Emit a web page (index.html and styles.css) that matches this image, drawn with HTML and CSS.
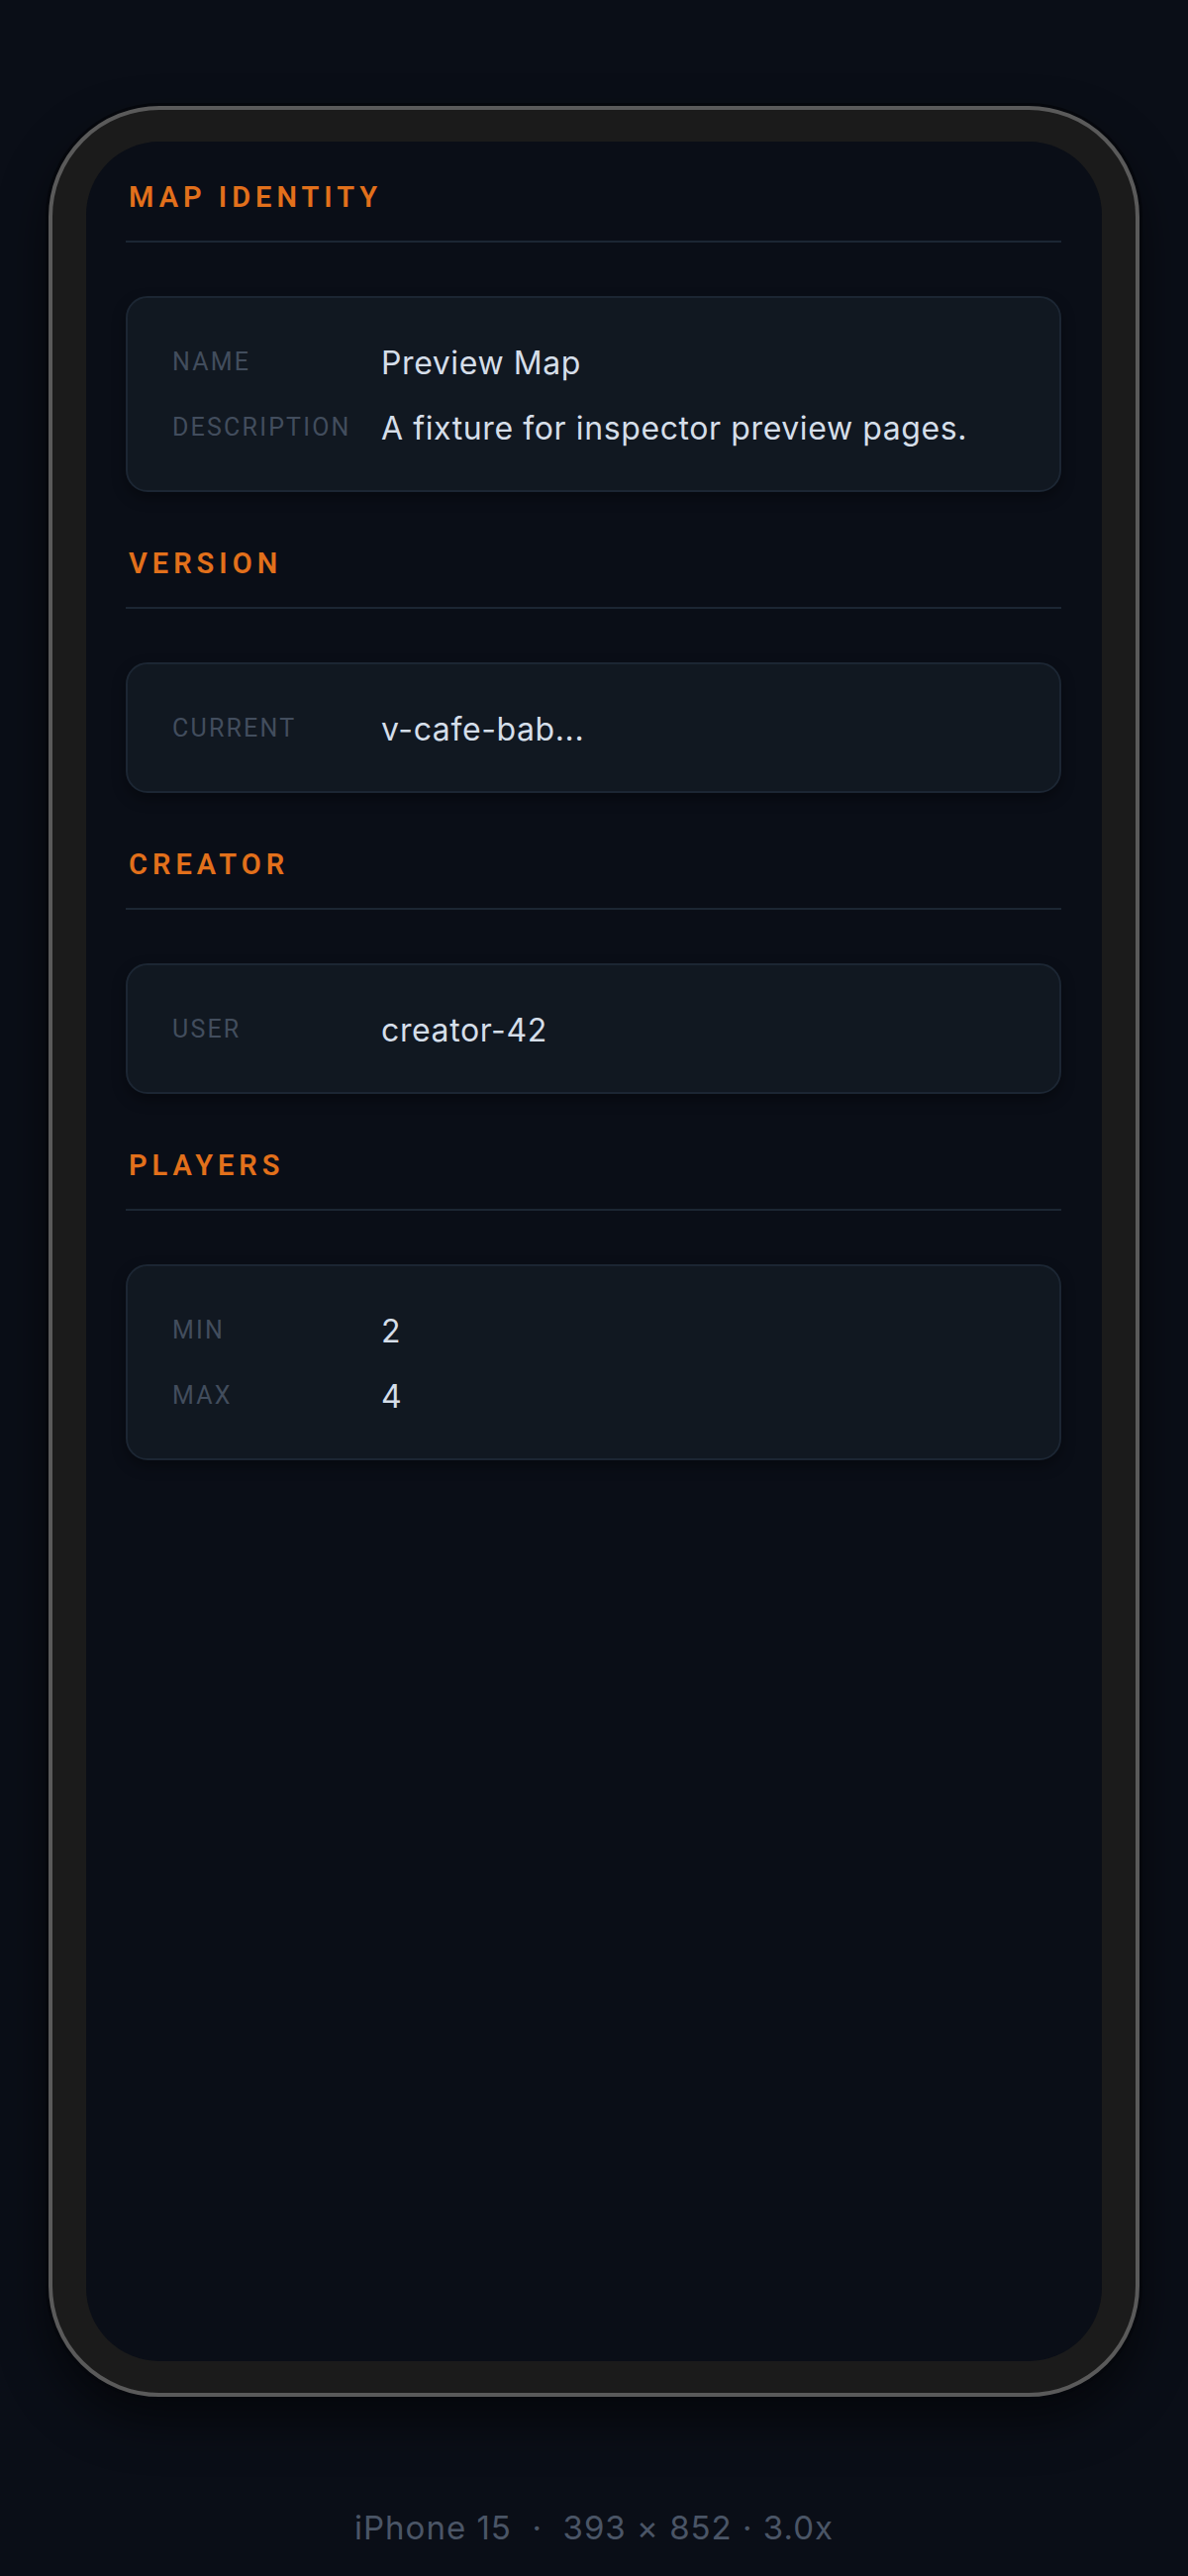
FILE: index.html
```html
<!DOCTYPE html>
<html lang="en">
<head>
<meta charset="utf-8">
<title>Map Inspector Preview</title>
<link rel="stylesheet" href="styles.css">
</head>
<body>
<main class="stage">
  <div class="device">
    <div class="screen">
      <section class="section">
        <h2 class="section-title">Map Identity</h2>
        <div class="card">
          <div class="row"><span class="label">Name</span><span class="value">Preview Map</span></div>
          <div class="row"><span class="label">Description</span><span class="value">A fixture for inspector preview pages.</span></div>
        </div>
      </section>
      <section class="section">
        <h2 class="section-title">Version</h2>
        <div class="card">
          <div class="row"><span class="label">Current</span><span class="value">v-cafe-bab...</span></div>
        </div>
      </section>
      <section class="section">
        <h2 class="section-title">Creator</h2>
        <div class="card">
          <div class="row"><span class="label">User</span><span class="value">creator-42</span></div>
        </div>
      </section>
      <section class="section">
        <h2 class="section-title">Players</h2>
        <div class="card">
          <div class="row"><span class="label">Min</span><span class="value">2</span></div>
          <div class="row"><span class="label">Max</span><span class="value">4</span></div>
        </div>
      </section>
    </div>
  </div>
  <p class="caption">iPhone 15 &nbsp;·&nbsp; 393 × 852 · 3.0x</p>
</main>
</body>
</html>
```

FILE: styles.css
```css
* {
  box-sizing: border-box;
}

html, body {
  margin: 0;
  padding: 0;
  background: #0a0e17;
}

body {
  font-family: "Inter", "Roboto", sans-serif;
  color: #d5dee9;
}

.stage {
  display: flex;
  flex-direction: column;
  align-items: center;
  padding-top: 107px;
  min-height: 2602px;
}

.device {
  width: 1102px;
  height: 2314px;
  border: 4px solid #5a5a5a;
  border-radius: 112px;
  background: #1b1b1b;
  padding: 32px 34px;
  box-shadow: 0 0 0 3px #05070c, 0 24px 48px rgba(0, 0, 0, 0.55);
  display: flex;
}

.screen {
  flex: 1;
  background: #0a0e17;
  border-radius: 74px;
  padding: 38px 41px 0 40px;
  display: flex;
  flex-direction: column;
  gap: 54px;
  overflow: hidden;
}

.section {
  display: flex;
  flex-direction: column;
}

.section-title {
  margin: 0 0 54px;
  padding: 0 0 26px 3px;
  border-bottom: 2px solid #1c2633;
  font-family: "Roboto", "Inter", sans-serif;
  font-weight: 600;
  font-size: 29px;
  line-height: 36px;
  letter-spacing: 5px;
  text-transform: uppercase;
  color: #e2701b;
}

.card {
  background: #111821;
  border: 2px solid #1c2633;
  border-radius: 22px;
  padding: 42px 45px;
  display: flex;
  flex-direction: column;
  gap: 22px;
  box-shadow: 0 6px 14px rgba(0, 0, 0, 0.35);
}

.row {
  display: flex;
  align-items: center;
  height: 44px;
}

.label {
  width: 211px;
  flex: none;
  padding-left: 0;
  padding-bottom: 0;
  font-family: "Roboto", "Inter", sans-serif;
  font-weight: 400;
  font-size: 25px;
  letter-spacing: 2.2px;
  text-transform: uppercase;
  color: #424d5d;
}

.value {
  font-family: "Inter", "Roboto", sans-serif;
  font-size: 32px;
  letter-spacing: 0.6px;
  color: #d5dee9;
  white-space: nowrap;
  padding-top: 2px;
}

.caption {
  margin: 112px 0 0;
  font-family: "Inter", "Roboto", sans-serif;
  font-size: 33px;
  line-height: 40px;
  letter-spacing: 1px;
  color: #4a5566;
  white-space: pre;
}
```
